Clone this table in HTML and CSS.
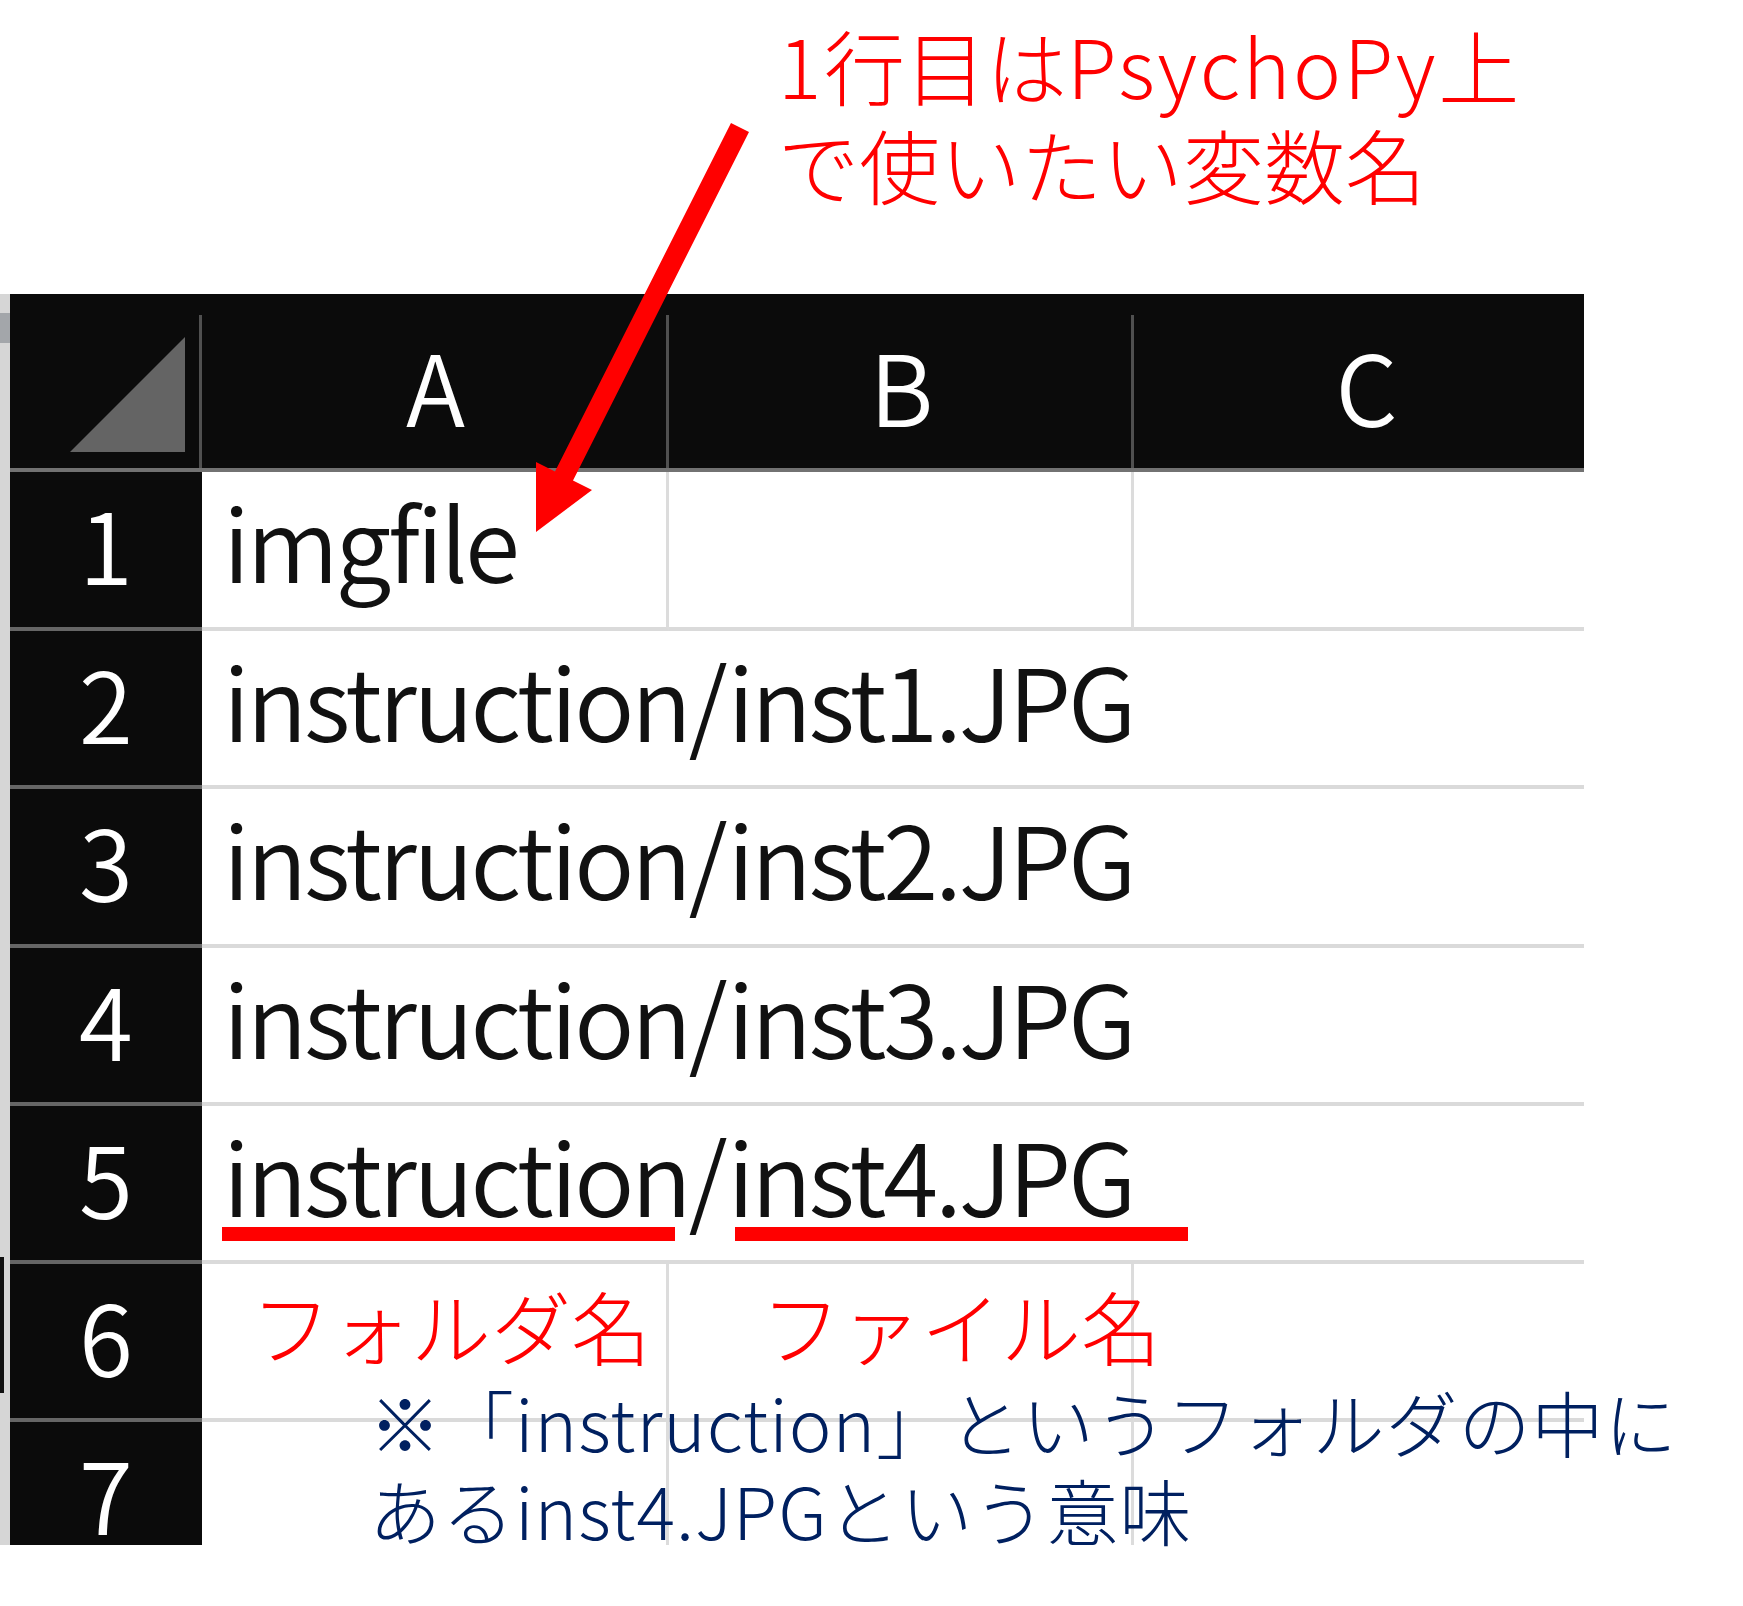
FILE: index.html
```html
<!DOCTYPE html>
<html lang="ja">
<head>
    <meta charset="UTF-8">
    <meta name="viewport" content="width=device-width, initial-scale=1.0">
    <title>PsychoPy 条件ファイル</title>
    <link rel="stylesheet" href="styles.css">
</head>
<body>
    <div class="page">
        <div class="caption"><span class="latin">1</span>行目は<span class="latin">PsychoPy</span>上<br>で使いたい変数名</div>

        <div class="sheet-area">
            <div class="strip">
                <span class="strip-mark top"></span>
                <span class="strip-mark low"></span>
            </div>
            <div class="sheet">
                <!-- column headers -->
                <div class="head corner"><span class="tri"></span></div>
                <div class="head col">A</div>
                <div class="head col">B</div>
                <div class="head col">C</div>

                <div class="rowhead">1</div>
                <div class="cell">imgfile</div>
                <div class="cell"></div>
                <div class="cell last"></div>

                <div class="rowhead">2</div>
                <div class="cell wide">instruction/inst1.JPG</div>

                <div class="rowhead">3</div>
                <div class="cell wide">instruction/inst2.JPG</div>

                <div class="rowhead">4</div>
                <div class="cell wide">instruction/inst3.JPG</div>

                <div class="rowhead">5</div>
                <div class="cell wide">instruction/inst4.JPG</div>

                <div class="rowhead">6</div>
                <div class="cell"></div>
                <div class="cell"></div>
                <div class="cell last"></div>

                <div class="rowhead end">7</div>
                <div class="cell end"></div>
                <div class="cell end"></div>
                <div class="cell last end"></div>
            </div>
        </div>

        <!-- annotations drawn over the sheet -->
        <span class="mark mark-folder"></span>
        <span class="mark mark-file"></span>
        <div class="label label-folder">フォルダ名</div>
        <div class="label label-file">ファイル名</div>
        <div class="note">※「instruction」というフォルダの中に<br>あるinst4.JPGという意味</div>

        <svg class="arrow" width="1743" height="600" viewBox="0 0 1743 600">
            <polygon points="731,123 749,132 573,480.5 592,490 536,532 536,462 555,471.5" fill="#ff0000"/>
        </svg>
    </div>
</body>
</html>
```

FILE: styles.css
```css
body {
    margin: 0;
    background: #fff;
    font-family: "Noto Sans CJK JP", "Noto Sans", sans-serif;
}
.page {
    position: relative;
    width: 1743px;
    height: 1606px;
    overflow: hidden;
}
.caption {
    box-sizing: border-box;
    height: 294px;
    padding: 14px 0 0 778px;
    color: #ff0000;
    font-size: 81px;
    font-weight: 300;
    line-height: 99px;
    white-space: nowrap;
}
.caption .latin {
    letter-spacing: 2.6px;
}
.sheet-area {
    display: flex;
}
.strip {
    display: flex;
    flex-direction: column;
    width: 10px;
    height: 1251px;
    background: #d6d6d6;
}
.strip-mark.top {
    margin-top: 19px;
    height: 30px;
    background: #a3a6aa;
}
.strip-mark.low {
    margin-top: 914px;
    width: 4px;
    height: 136px;
    background: #111;
}
.sheet {
    display: grid;
    grid-template-columns: 192px 467px 465px 465px;
    grid-template-rows: 178px 159px repeat(5, 158.3px) 122.7px;
    width: 1574px;
    overflow: hidden;
}
.head {
    box-sizing: border-box;
    background: #0b0b0b linear-gradient(#505050, #505050) right 21px / 3px calc(100% - 21px) no-repeat;
    border-bottom: 4px solid #727272;
}
.corner {
    display: flex;
    align-items: flex-end;
    justify-content: flex-end;
    padding: 0 17px 16px 0;
}
.tri {
    width: 115px;
    height: 115px;
    background: #646464;
    clip-path: polygon(100% 0, 100% 100%, 0 100%);
}
.col {
    padding-top: 40px;
    color: #fff;
    font-size: 98px;
    font-weight: 350;
    line-height: 100px;
    text-align: center;
}
.rowhead {
    box-sizing: border-box;
    padding-top: 20px;
    background: #0b0b0b;
    border-bottom: 4px solid #666;
    color: #fff;
    font-size: 98px;
    font-weight: 350;
    line-height: 100px;
    text-align: center;
}
.cell {
    box-sizing: border-box;
    padding: 18px 0 0 21px;
    border-bottom: 4px solid #dadada;
    border-right: 3px solid #dcdcdc;
    color: #111;
    font-size: 100px;
    font-weight: 350;
    letter-spacing: -3.2px;
    line-height: 100px;
    white-space: nowrap;
}
.cell.wide {
    grid-column: span 3;
    border-right: none;
}
.cell.last {
    border-right: none;
}
.end {
    border-bottom: none;
}
.mark {
    position: absolute;
    top: 1227px;
    width: 453px;
    height: 14px;
    background: #ff0000;
}
.mark-folder {
    left: 222px;
}
.mark-file {
    left: 735px;
}
.label {
    position: absolute;
    top: 1284px;
    color: #ff0000;
    font-size: 80px;
    font-weight: 300;
    line-height: 80px;
    white-space: nowrap;
}
.label-folder {
    left: 251px;
}
.label-file {
    left: 761px;
}
.note {
    position: absolute;
    top: 1377px;
    left: 369px;
    color: #002060;
    font-size: 72px;
    font-weight: 300;
    letter-spacing: 1px;
    line-height: 88px;
    white-space: nowrap;
}
.arrow {
    position: absolute;
    top: 0;
    left: 0;
    pointer-events: none;
}
```
